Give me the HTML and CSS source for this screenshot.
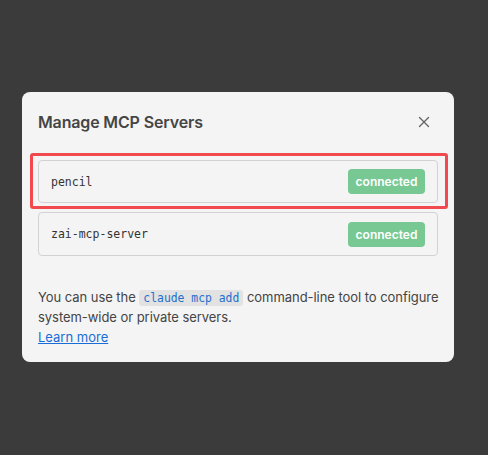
FILE: index.html
```html
<!DOCTYPE html>
<html>
<head>
<meta charset="utf-8">
<link rel="stylesheet" href="styles.css">
</head>
<body>
<div class="stage">
  <div class="modal">
    <div class="header">
      <h1 class="title">Manage MCP Servers</h1>
      <button class="close" aria-label="Close">
        <svg width="12" height="12" viewBox="0 0 12 12"><path d="M1.5 1.5 L10.5 10.5 M10.5 1.5 L1.5 10.5" stroke="#666" stroke-width="1.4" stroke-linecap="round" fill="none"/></svg>
      </button>
    </div>
    <div class="list">
      <div class="row"><span class="name">pencil</span><span class="badge">connected</span></div>
      <div class="row"><span class="name">zai-mcp-server</span><span class="badge">connected</span></div>
    </div>
    <p class="info">You can use the <code class="code">claude mcp add</code> command-line tool to configure system-wide or private servers.</p>
    <a class="link" href="#">Learn more</a>
    <div class="highlight"></div>
  </div>
</div>
</body>
</html>
```
FILE: styles.css
```css
html, body {
  margin: 0;
  padding: 0;
  background: #3b3b3b;
}
.stage {
  padding: 92px 0 0 22px;
}
.modal {
  position: relative;
  width: 432px;
  box-sizing: border-box;
  background: #f4f4f4;
  border-radius: 8px;
  padding: 0 16px 15px;
  font-family: Inter, "Noto Sans", sans-serif;
  color: #444;
}
.header {
  height: 60px;
  display: flex;
  align-items: center;
  justify-content: space-between;
}
.title {
  margin: 0;
  font-size: 16px;
  font-weight: 600;
  color: #454545;
  letter-spacing: -0.15px;
}
.close {
  border: 0;
  background: none;
  padding: 0;
  width: 16px;
  height: 16px;
  display: flex;
  align-items: center;
  justify-content: center;
  margin-right: 6px;
}
.list {
  margin-top: 8px;
  display: flex;
  flex-direction: column;
  gap: 9px;
}
.row {
  height: 43px;
  box-sizing: border-box;
  border: 1px solid #d2d2d2;
  border-radius: 4px;
  display: flex;
  align-items: center;
  justify-content: space-between;
  padding: 0 12px 0 12px;
}
.row + .row {
  height: 44px;
}
.name {
  font-family: "DejaVu Sans Mono", monospace;
  font-size: 11.5px;
  color: #333;
}
.badge {
  width: 77px;
  height: 25px;
  box-sizing: border-box;
  display: flex;
  align-items: center;
  justify-content: center;
  background: #77c892;
  color: #fff;
  font-weight: 600;
  font-size: 12px;
  border-radius: 4px;
}
.info {
  margin: 31px -12px 0 0;
  font-size: 13px;
  line-height: 20px;
  color: #444;
  letter-spacing: -0.05px;
}
.code {
  display: inline-block;
  font-family: "DejaVu Sans Mono", monospace;
  font-size: 11.4px;
  line-height: 16px;
  color: #1f6fce;
  background: #e2e2e2;
  border-radius: 3px;
  padding: 0 4px;
  letter-spacing: 0;
}
.link {
  display: block;
  width: max-content;
  font-size: 13px;
  line-height: 20px;
  color: #1a6dd6;
  text-decoration: underline;
}
.highlight {
  position: absolute;
  left: 8px;
  top: 61px;
  width: 418px;
  height: 56px;
  box-sizing: border-box;
  border: 3px solid #f04a4f;
  border-radius: 3px;
  pointer-events: none;
}
```
